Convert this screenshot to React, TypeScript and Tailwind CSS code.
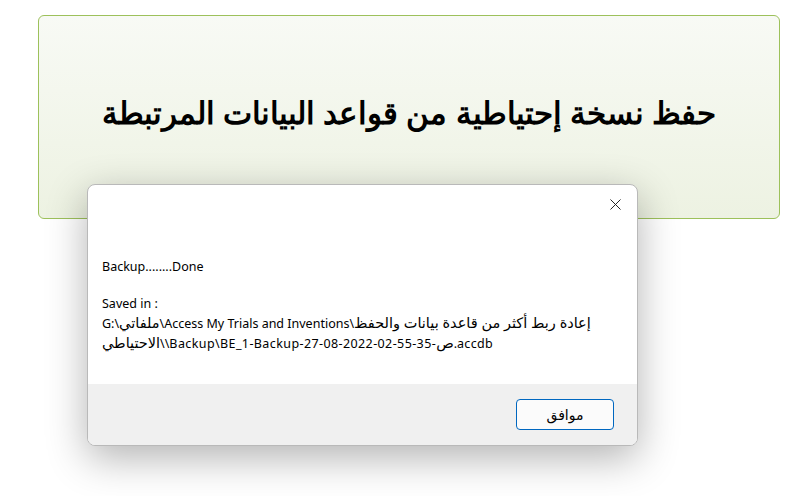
import { X } from "lucide-react";

const uiFont = "font-['Noto_Sans','DejaVu_Sans',sans-serif]";
const arFont = "text-[14.5px]";

function BackupDialog() {
  return (
    <div className="absolute left-[87px] top-[184px] flex h-[262px] w-[551px] flex-col overflow-hidden rounded-[8px] border border-[#b9b9b9] bg-white shadow-[0_12px_40px_rgba(0,0,0,0.30)]">
      <div className="flex h-[199px] flex-col">
        <div className="flex justify-end pr-[12px] pt-[10px]">
          <X className="h-[19px] w-[19px] text-[#1a1a1a]" strokeWidth={1.2} />
        </div>
        <div className={`${uiFont} mt-[43px] pl-[14px] text-[12.5px] leading-[19px] text-black`}>
          <p>Backup........Done</p>
          <p className="h-[18px]"></p>
          <p>Saved in :</p>
          <p dir="ltr">
            <bdi>G:\</bdi>
            <bdi className={arFont}>ملفاتي</bdi>
            <bdi>\Access My Trials and Inventions\</bdi>
            <bdi className={arFont}>إعادة ربط أكثر من قاعدة بيانات والحفظ</bdi>
          </p>
          <p dir="ltr">
            <bdi className={arFont}>الاحتياطي</bdi>
            <bdi className="tracking-[0.4px]">\\Backup\BE_1-Backup-27-08-2022-02-55-35-</bdi>
            <bdi className={arFont}>ص</bdi>
            <bdi className="tracking-[0.3px]">.accdb</bdi>
          </p>
        </div>
      </div>
      <div className="flex flex-1 items-start justify-end bg-[#f0f0f0] pr-[23px] pt-[15px]">
        <button
          type="button"
          className={`${uiFont} h-[31px] w-[98px] rounded-[4px] border border-[#0067c0] bg-[#fbfbfb] text-[14px] text-black`}
        >
          موافق
        </button>
      </div>
    </div>
  );
}

export default function App() {
  return (
    <div className="relative h-[496px] w-[794px] overflow-hidden bg-white">
      <div className="pl-[38px] pt-[15px]">
        <div className="flex h-[204px] w-[742px] items-center justify-center rounded-[6px] border border-[#9dc15b] bg-gradient-to-b from-[#f8faf5] to-[#edf2e2] pb-[10px]">
          <h1 dir="rtl" className="whitespace-nowrap font-['Noto_Sans',sans-serif] text-[31px] font-bold text-black">
            حفظ نسخة إحتياطية من قواعد البيانات المرتبطة
          </h1>
        </div>
      </div>
      <BackupDialog />
    </div>
  );
}
